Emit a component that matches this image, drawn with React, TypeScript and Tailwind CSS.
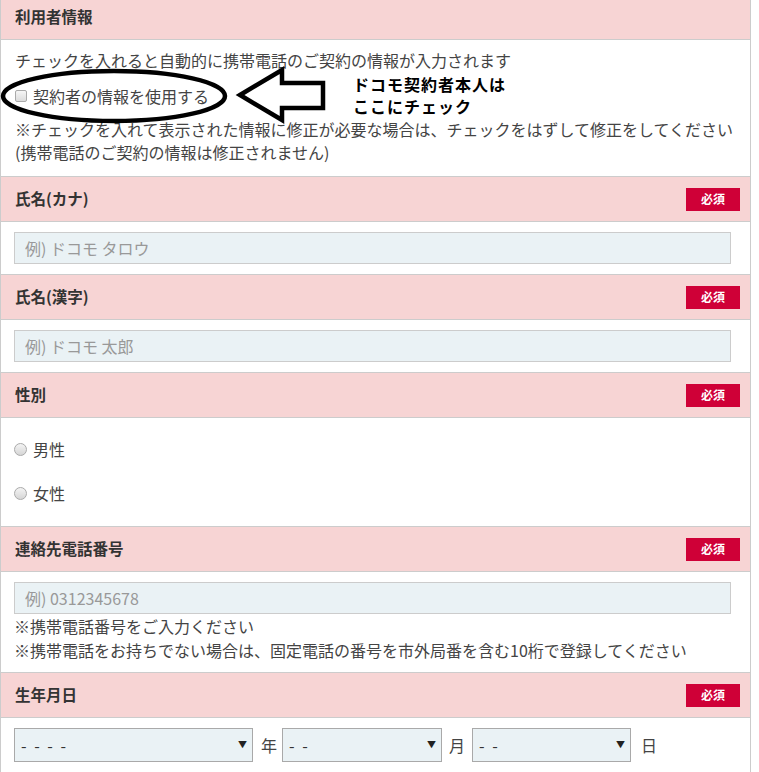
import React from 'react';

const font = { fontFamily: '"Noto Sans CJK JP", "Noto Sans", sans-serif' };

const Badge: React.FC = () => (
  <span className="flex h-[23px] w-[54px] items-center justify-center bg-[#cf0037] text-[12px] font-bold text-white">
    必須
  </span>
);

const Header: React.FC<{ title: string; required?: boolean; first?: boolean }> = ({ title, required, first }) => (
  <div
    className={`flex items-center justify-between border-b border-[#ccc] bg-[#f7d4d4] pl-[14px] pr-[10px] ${
      first ? 'h-[40px] pb-[5px]' : 'h-[45px]'
    }`}
  >
    <span className="text-[15.5px] font-bold text-[#333]">{title}</span>
    {required && <Badge />}
  </div>
);

const TextInput: React.FC<{ placeholder: string }> = ({ placeholder }) => (
  <input
    type="text"
    placeholder={placeholder}
    className="block h-[32px] w-[717px] border border-[#ccc] bg-[#eaf2f5] px-[10px] text-[16px] text-[#333] outline-none placeholder:text-[#999]"
    style={font}
  />
);

const Radio: React.FC<{ label: string }> = ({ label }) => (
  <label className="flex h-[44px] items-center gap-[6px]">
    <span className="h-[13px] w-[13px] rounded-full border border-[#aaa] bg-gradient-to-b from-[#f4f4f4] to-[#d6d6d6]" />
    <span>{label}</span>
  </label>
);

const Select: React.FC<{ value: string; width: string }> = ({ value, width }) => (
  <div className={`relative h-[34px] ${width}`}>
    <select
      className="block h-full w-full appearance-none border border-[#a9a9a9] bg-[#eaf2f5] pl-[6px] text-[16px] tracking-[2px] text-[#333] outline-none"
      style={font}
      defaultValue={value}
    >
      <option>{value}</option>
    </select>
    <span className="pointer-events-none absolute right-[6px] top-[10px] text-[9px] leading-[14px] text-[#222]">▼</span>
  </div>
);

export default function App() {
  return (
    <div className="relative w-[751px] border-x border-[#ccc] bg-white text-[16px] text-[#444]" style={font}>
      <Header title="利用者情報" first />
      <div className="border-b border-[#ccc] px-[14px] pb-[13px] pt-[8px]">
        <p className="whitespace-nowrap leading-[25px]">チェックを入れると自動的に携帯電話のご契約の情報が入力されます</p>
        <label className="mt-[10px] flex h-[25px] items-center gap-[6px]">
          <span className="h-[12px] w-[12px] rounded-[2px] border border-[#aaa] bg-gradient-to-b from-[#f6f6f6] to-[#dcdcdc]" />
          <span>契約者の情報を使用する</span>
        </label>
        <p className="mt-[11px] whitespace-nowrap leading-[21px]">
          ※チェックを入れて表示された情報に修正が必要な場合は、チェックをはずして修正をしてください
        </p>
        <p className="mt-[2px] whitespace-nowrap leading-[21px]">(携帯電話のご契約の情報は修正されません)</p>
      </div>

      <Header title="氏名(カナ)" required />
      <div className="border-b border-[#ccc] px-[13px] py-[10px]">
        <TextInput placeholder="例) ドコモ タロウ" />
      </div>

      <Header title="氏名(漢字)" required />
      <div className="border-b border-[#ccc] px-[13px] py-[10px]">
        <TextInput placeholder="例) ドコモ 太郎" />
      </div>

      <Header title="性別" required />
      <div className="border-b border-[#ccc] px-[13px] pb-[11px] pt-[9px]">
        <Radio label="男性" />
        <Radio label="女性" />
      </div>

      <Header title="連絡先電話番号" required />
      <div className="border-b border-[#ccc] px-[13px] py-[10px] leading-[24px]">
        <TextInput placeholder="例) 0312345678" />
        <p>※携帯電話番号をご入力ください</p>
        <p className="whitespace-nowrap">※携帯電話をお持ちでない場合は、固定電話の番号を市外局番を含む10桁で登録してください</p>
      </div>

      <Header title="生年月日" required />
      <div className="flex items-center px-[13px] pb-[12px] pt-[10px]">
        <Select value="- - - -" width="w-[239px]" />
        <span className="ml-[8px] mr-[5px]">年</span>
        <Select value="- -" width="w-[160px]" />
        <span className="ml-[7px] mr-[7px]">月</span>
        <Select value="- -" width="w-[159px]" />
        <span className="ml-[10px]">日</span>
      </div>

      {/* annotation drawn over the form */}
      <svg
        className="pointer-events-none absolute left-[-1px] top-0"
        width="759"
        height="180"
        viewBox="0 0 759 180"
      >
        <ellipse cx="114" cy="96" rx="111" ry="25" fill="none" stroke="#000" strokeWidth="4.5" />
        <polygon
          points="240,95 282,70 282,83 323,83 323,108 282,108 282,120"
          fill="#fff"
          stroke="#000"
          strokeWidth="4.5"
          strokeLinejoin="miter"
        />
      </svg>
      <p className="pointer-events-none absolute left-[352px] top-[73px] text-[16px] font-bold leading-[22px] tracking-[1px] text-black">
        ドコモ契約者本人は
        <br />
        ここにチェック
      </p>
    </div>
  );
}
